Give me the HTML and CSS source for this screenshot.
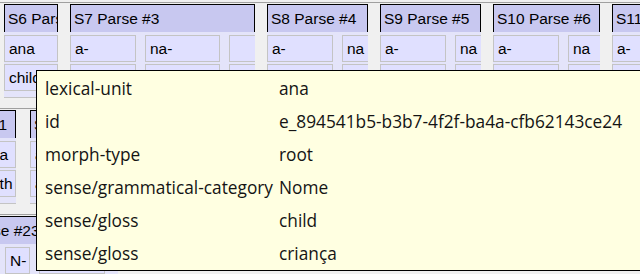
FILE: index.html
```html
<!DOCTYPE html>
<html lang="pt">

<head>
    <meta charset="UTF-8">
    <meta name="viewport" content="width=device-width, initial-scale=1">
    <title>Interlinear</title>
    <link rel="stylesheet" href="styles.css">
</head>
<body>
    <div class="section first">
        <div class="col w54">
            <div class="head">S6 Parse #2</div>
            <div class="row"><div class="cell full">ana</div></div>
            <div class="row"><div class="cell full">child</div></div>
        </div>
        <div class="col w185">
            <div class="head">S7 Parse #3</div>
            <div class="row">
                <div class="cell c66">a-</div>
                <div class="cell c75">na-</div>
                <div class="cell c66"></div>
            </div>
            <div class="row">
                <div class="cell c66">DEF-</div>
                <div class="cell c75">PL-</div>
                <div class="cell c66"></div>
            </div>
        </div>
        <div class="col w101">
            <div class="head">S8 Parse #4</div>
            <div class="row">
                <div class="cell c66">a-</div>
                <div class="cell c66">na</div>
            </div>
            <div class="row">
                <div class="cell c66">DEF-</div>
                <div class="cell c66">child</div>
            </div>
        </div>
        <div class="col w101">
            <div class="head">S9 Parse #5</div>
            <div class="row">
                <div class="cell c66">a-</div>
                <div class="cell c66">na</div>
            </div>
            <div class="row">
                <div class="cell c66">DEF-</div>
                <div class="cell c66">child</div>
            </div>
        </div>
        <div class="col w107">
            <div class="head">S10 Parse #6</div>
            <div class="row">
                <div class="cell c66">a-</div>
                <div class="cell c66">na</div>
            </div>
            <div class="row">
                <div class="cell c66">DEF-</div>
                <div class="cell c66">child</div>
            </div>
        </div>
        <div class="col w101">
            <div class="head">S11 Parse #7</div>
            <div class="row">
                <div class="cell c66">a-</div>
                <div class="cell c66">na</div>
            </div>
            <div class="row">
                <div class="cell c66">DEF-</div>
                <div class="cell c66">child</div>
            </div>
        </div>
    </div>

    <div class="section second">
        <div class="col w30">
            <div class="head">#1</div>
            <div class="row"><div class="cell full">na</div></div>
            <div class="row"><div class="cell full">eth</div></div>
        </div>
        <div class="col w185">
            <div class="head">S12 Parse #22</div>
            <div class="row">
                <div class="cell c66">a-</div>
                <div class="cell c75">na</div>
            </div>
            <div class="row">
                <div class="cell c66">at-</div>
                <div class="cell c75">child</div>
            </div>
        </div>
    </div>

    <div class="section third">
        <div class="col w185">
            <div class="head">S13 Parse #23</div>
            <div class="row">
                <div class="cell c61">ku-</div>
                <div class="cell c25">N-</div>
                <div class="cell c66">ana</div>
            </div>
        </div>
    </div>

    <div class="tooltip">
        <div class="key">lexical-unit</div><div class="val">ana</div>
        <div class="key">id</div><div class="val">e_894541b5-b3b7-4f2f-ba4a-cfb62143ce24</div>
        <div class="key">morph-type</div><div class="val">root</div>
        <div class="key">sense/grammatical-category</div><div class="val">Nome</div>
        <div class="key">sense/gloss</div><div class="val">child</div>
        <div class="key">sense/gloss</div><div class="val">criança</div>
    </div>
</body>
</html>
```

FILE: styles.css
```css
body {
    margin: 0;
    width: 640px;
    height: 274px;
    overflow: hidden;
    position: relative;
    background: #f0f0f0;
    font-family: "Liberation Sans", Arial, sans-serif;
    font-size: 15.5px;
    color: #000;
}

.section {
    display: flex;
    gap: 12px;
    padding-top: 1px;
    border-top: 1px solid #a0a0a0;
    white-space: nowrap;
}

.first {
    margin-top: 2px;
    margin-bottom: 10px;
    padding-left: 4px;
}

.second {
    margin-left: -14px;
    margin-bottom: 10px;
    gap: 14px;
}

.third {
    margin-left: -67px;
}

.col {
    flex: none;
    overflow: hidden;
    background: #e4e4fa;
    border-bottom: 1px solid #c4c4c4;
    padding-bottom: 4px;
}

.w30 { width: 30px; }
.w54 { width: 54px; }
.w101 { width: 101px; }
.w107 { width: 107px; }
.w185 { width: 185px; }

.head {
    height: 27px;
    line-height: 27px;
    padding-left: 3px;
    background: #c8c8f0;
    border: 1px solid #000;
    border-bottom: none;
    overflow: hidden;
    margin-bottom: 3px;
}

.row {
    display: flex;
    gap: 9px;
    margin-bottom: 2px;
}

.cell {
    flex: none;
    box-sizing: border-box;
    height: 27px;
    line-height: 25px;
    padding-left: 4px;
    background: #e0e0ff;
    border: 1px solid #c4c4c4;
    overflow: hidden;
}

.full { width: 100%; }
.c25 { width: 25px; }
.c61 { width: 63px; }
.c66 { width: 66px; }
.c75 { width: 75px; }

.tooltip {
    position: absolute;
    left: 36px;
    top: 70px;
    width: 600px;
    height: 198px;
    background: #ffffe1;
    border: 1px solid #000;
    display: grid;
    grid-template-columns: 234px auto;
    grid-auto-rows: 33px;
    align-items: center;
    padding: 1px 0 0 8px;
    box-sizing: content-box;
    font-family: "Open Sans", sans-serif;
    font-size: 17.3px;
    color: #141414;
}
```
